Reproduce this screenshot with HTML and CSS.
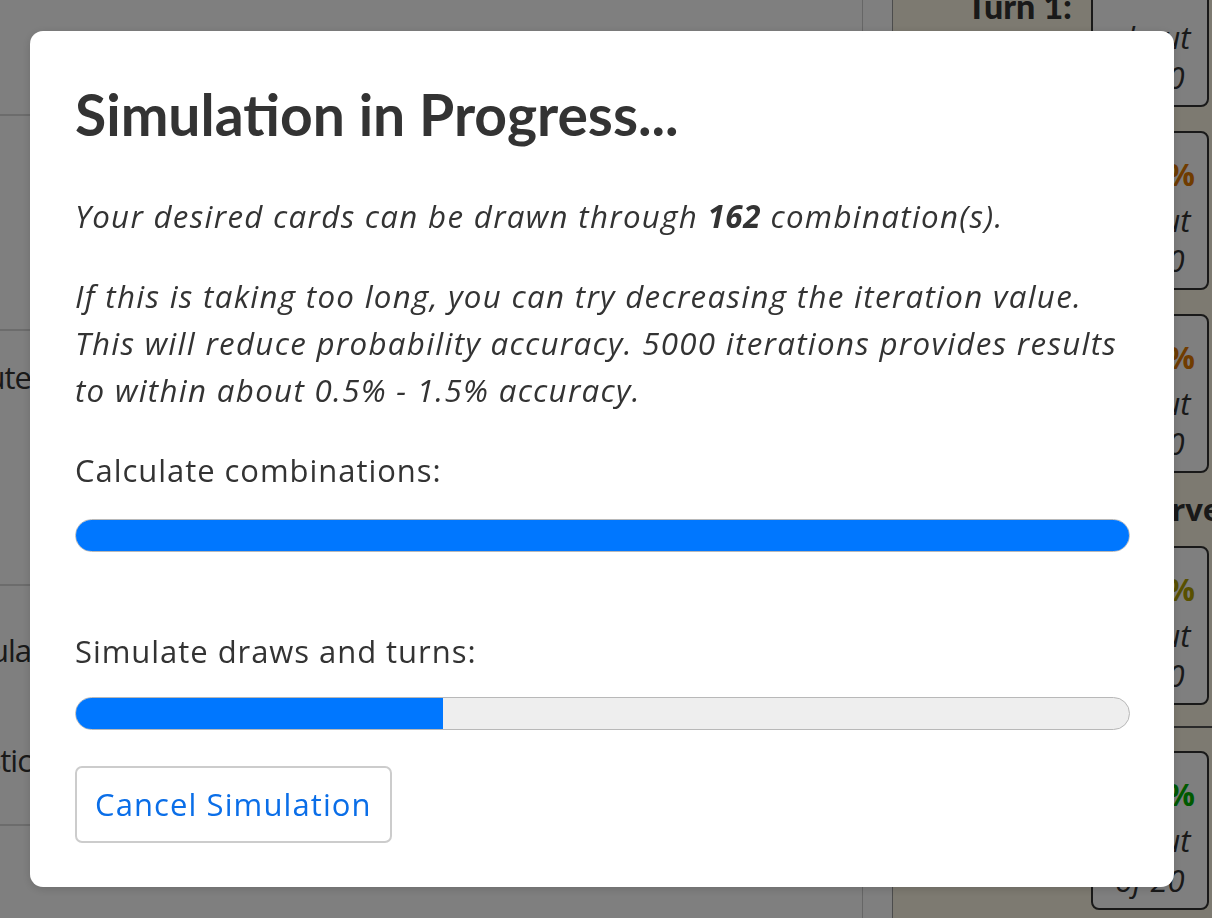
FILE: index.html
```html
<!DOCTYPE html>
<html lang="en">
<head>
<meta charset="utf-8">
<title>Simulation in Progress</title>
<link rel="stylesheet" href="styles.css">
</head>
<body>
<div class="page">
  <main class="main">
    <div class="row row-top"></div>
    <div class="row row-a"></div>
    <div class="row row-b"><span class="row-label">Compute</span></div>
    <div class="row row-c"><span class="row-label">Calcula</span><span class="row-label row-label-2">Statistic</span></div>
  </main>
  <aside class="turns">
    <div class="turn-col">
      <div class="turn-head">Turn 1:</div>
    </div>
    <div class="card-col">
      <div class="card card-1"><span class="pct">&nbsp;</span><span class="about">about</span><span class="of">of 20</span></div>
      <div class="card card-2"><span class="pct pct-orange">12.4%</span><span class="about">about</span><span class="of">of 20</span></div>
      <div class="card card-3"><span class="pct pct-orange">38.5%</span><span class="about">about</span><span class="of">of 20</span></div>
      <div class="curve-head">Curve</div>
      <div class="card card-4"><span class="pct pct-olive">61.9%</span><span class="about">about</span><span class="of">of 20</span></div>
      <div class="divider"></div>
      <div class="card card-5"><span class="pct pct-green">88.6%</span><span class="about">about</span><span class="of">of 20</span></div>
    </div>
  </aside>
</div>

<div class="backdrop"></div>

<div class="modal" role="dialog" aria-labelledby="sim-title">
  <h3 id="sim-title" class="modal-title">Simulation in Progress...</h3>
  <p class="note">Your desired cards can be drawn through <strong>162</strong> combination(s).</p>
  <p class="note">If this is taking too long, you can try decreasing the iteration value. This will reduce probability accuracy. 5000 iterations provides results to within about 0.5% - 1.5% accuracy.</p>
  <div class="step">
    <div class="step-label">Calculate combinations:</div>
    <div class="progress"><div class="progress-bar" style="width:100%"></div></div>
  </div>
  <div class="step step-2">
    <div class="step-label">Simulate draws and turns:</div>
    <div class="progress"><div class="progress-bar" style="width:34.9%"></div></div>
  </div>
  <button class="btn-cancel" type="button">Cancel Simulation</button>
</div>
</body>
</html>
```

FILE: styles.css
```css
* { box-sizing: border-box; }

html, body {
  margin: 0;
  height: 100%;
}

body {
  font-family: "Open Sans", "Noto Sans", sans-serif;
  color: #333;
  background: #fff;
  overflow: hidden;
}

/* ---------- background page ---------- */
.page {
  display: flex;
  height: 918px;
}

.main {
  width: 863px;
  border-right: 1px solid #ccc;
  display: flex;
  flex-direction: column;
}

.row {
  border-bottom: 2px solid #d8d8d8;
  position: relative;
  overflow: hidden;
}
.row-top { height: 116px; }
.row-a { height: 215px; }
.row-b { height: 255px; }
.row-c { height: 240px; }

.row-label {
  font-size: 31px;
  line-height: 40px;
  letter-spacing: -1px;
  position: absolute;
  right: calc(100% - 31px);
  white-space: nowrap;
}
.row-b .row-label { top: 26px; }
.row-c .row-label { top: 44px; }
.row-c .row-label-2 { top: 154px; }

.turns {
  flex: 1;
  display: flex;
  background: #faf5e2;
  margin-left: 29px;
  border-left: 1px solid #999;
}

.turn-col {
  width: 206px;
}

.turn-head {
  font-family: Lato, sans-serif;
  font-weight: 900;
  font-size: 34px;
  text-align: right;
  padding: 0 26px 0 0;
  height: 40px;
  line-height: 30px;
  margin-top: -9px;
  border-right: 1px solid #555;
}

.card-col {
  width: 120px;
  margin-left: -8px;
  display: flex;
  flex-direction: column;
  gap: 24px;
  margin-top: -52px;
}

.card {
  background: #fff;
  border: 2px solid #333;
  border-radius: 8px;
  width: 118px;
  height: 159px;
  display: flex;
  flex-direction: column;
  align-items: center;
  justify-content: center;
  padding-top: 12px;
  font-size: 31px;
  line-height: 40px;
  flex-shrink: 0;
}
.card .pct { font-weight: 700; margin-bottom: 6px; }
.card .about, .card .of { font-style: italic; }
.pct-orange { color: #e07800; }
.pct-olive { color: #b0a000; }
.pct-green { color: #00b400; }

.curve-head {
  font-weight: 700;
  font-size: 31px;
  height: 25px;
  line-height: 25px;
  white-space: nowrap;
  text-indent: 40px;
}

.divider {
  height: 0;
  border-top: 2px solid #555;
  margin: -3px -30px -1px -10px;
}

/* ---------- backdrop + modal ---------- */
.backdrop {
  position: fixed;
  inset: 0;
  background: rgba(0, 0, 0, 0.5);
}

.modal {
  position: fixed;
  left: 30px;
  top: 31px;
  width: 1144px;
  background: #fff;
  border-radius: 13px;
  padding: 50px 44px 44px 45px;
  box-shadow: 0 2px 10px rgba(0,0,0,0.15);
}

.modal-title {
  margin: 0 0 46px;
  font-family: Lato, sans-serif;
  font-size: 57px;
  font-weight: 700;
  line-height: 66px;
  color: #333;
}

.note {
  font-style: italic;
  font-size: 31.3px;
  line-height: 47px;
  letter-spacing: 1.3px;
  margin: 0 0 33px;
}
.note strong { font-weight: 700; letter-spacing: 0.6px; }

.step-label {
  font-size: 31px;
  line-height: 47px;
  letter-spacing: 0.95px;
  margin-bottom: 25px;
}
.step-2 .step-label { margin-bottom: 22px; }

.step { margin-bottom: 76px; }
.step-2 { margin-bottom: 36px; }

.progress {
  height: 33px;
  border-radius: 17px;
  background: #eee;
  border: 1px solid #b8b8b8;
  overflow: hidden;
}

.progress-bar {
  height: 100%;
  background: #0077ff;
}

.btn-cancel {
  font-family: inherit;
  font-size: 31px;
  letter-spacing: 1.1px;
  color: #0a6ee8;
  background: #fff;
  border: 2px solid #ccc;
  border-radius: 7px;
  padding: 0 18px;
  height: 77px;
  line-height: 73px;
  cursor: pointer;
}
```
